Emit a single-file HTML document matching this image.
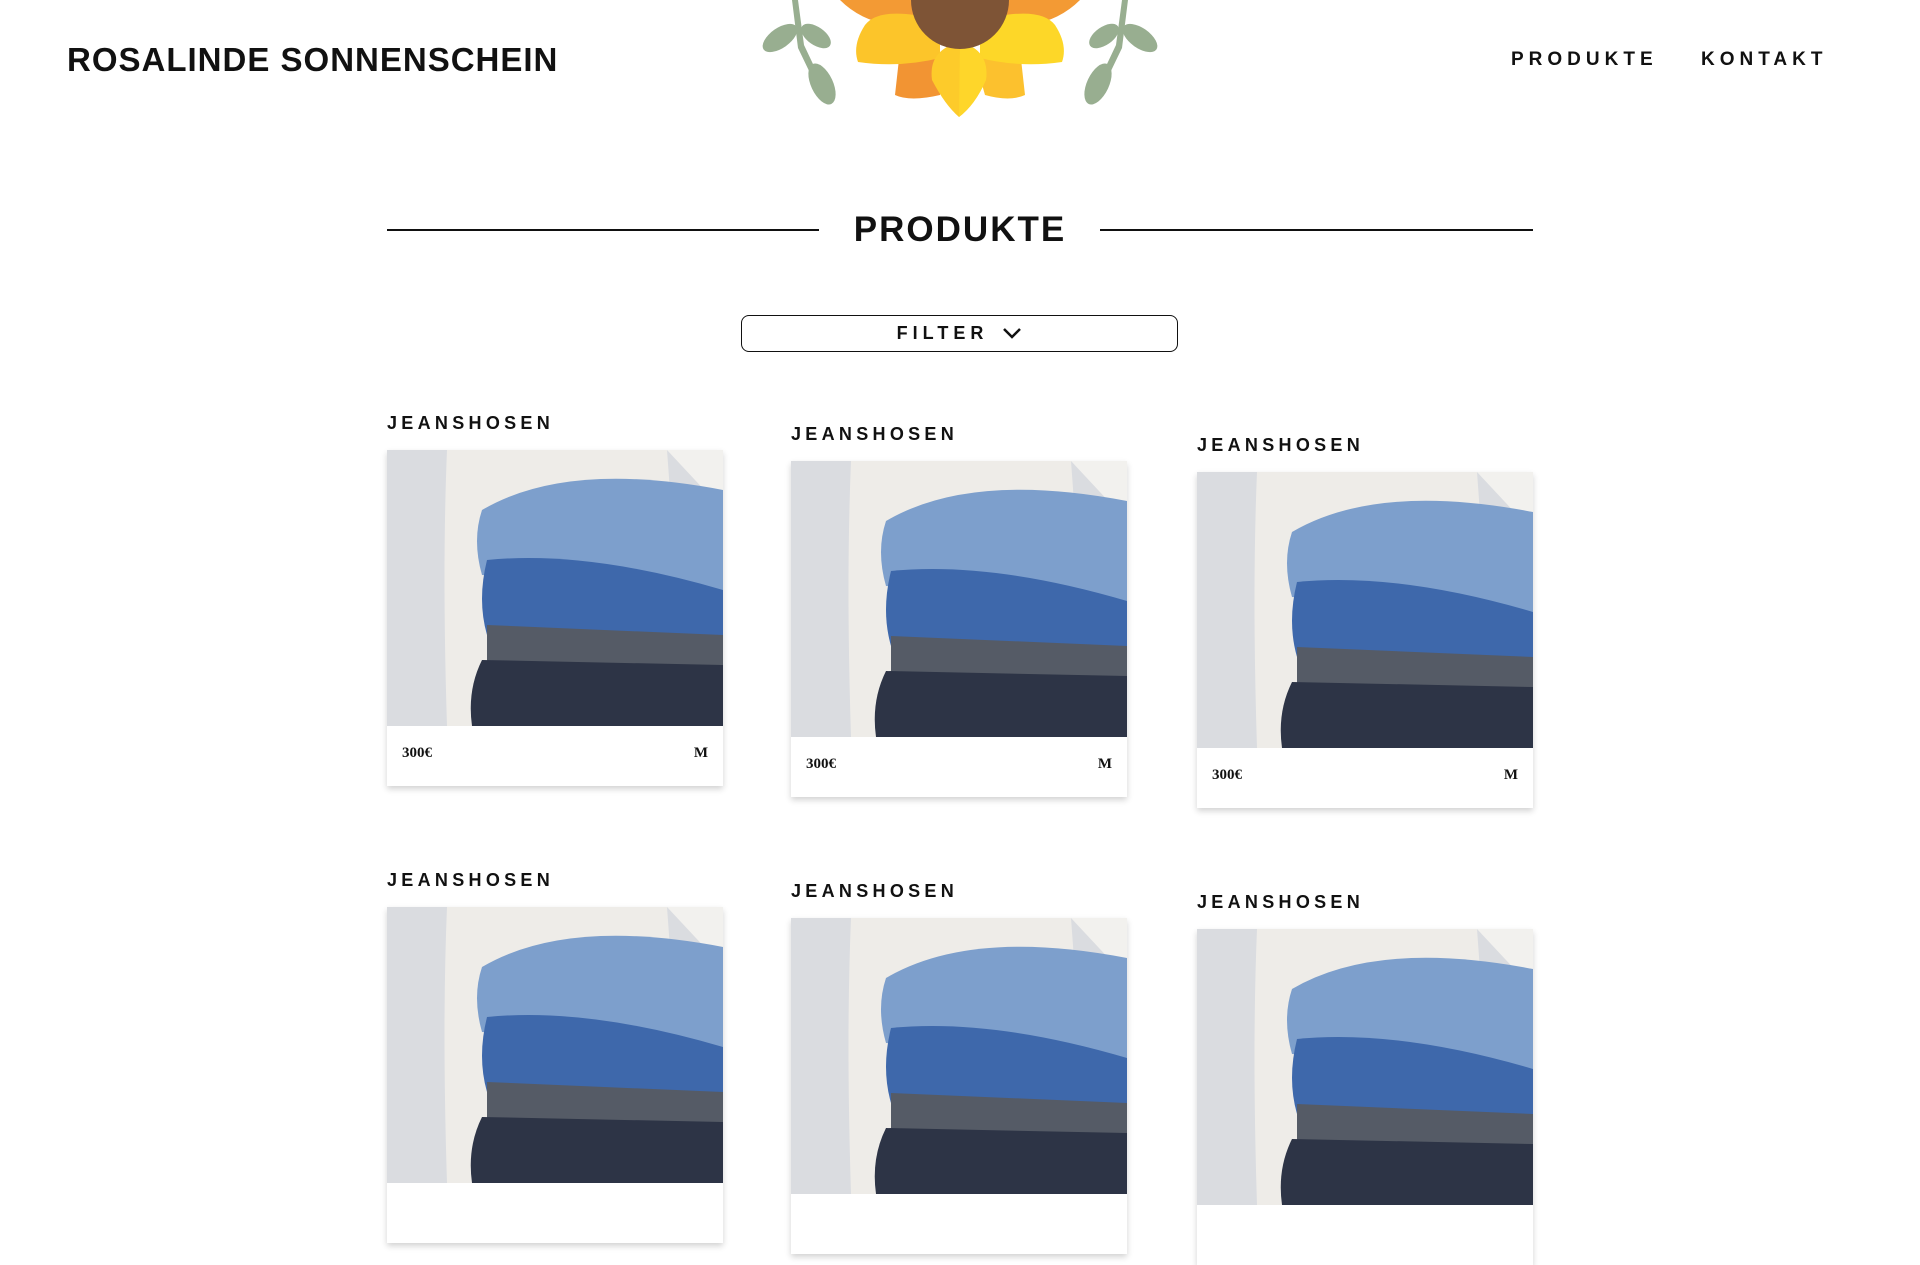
<!DOCTYPE html>
<html><head><meta charset="utf-8"><style>
*{margin:0;padding:0;box-sizing:border-box}
body{width:1920px;height:1080px;overflow:hidden;background:#fff;font-family:"Liberation Sans",sans-serif;position:relative;color:#111}
.logo{position:absolute;left:67px;top:41px;font-size:33px;font-weight:bold;letter-spacing:1px}
.nav{position:absolute;top:49px;font-size:19px;font-weight:bold;letter-spacing:5px}
.title{position:absolute;left:0;width:1920px;text-align:center;top:210px;font-size:35px;font-weight:bold;letter-spacing:2px}
.line{position:absolute;top:229px;height:2px;background:#111}
.filter{position:absolute;left:741px;top:315px;width:437px;height:37px;border:1.5px solid #111;border-radius:8px;text-align:center;font-size:18px;font-weight:bold;letter-spacing:5px;line-height:34px}
.lab{position:absolute;font-size:18px;font-weight:bold;letter-spacing:4.3px}
.card{position:absolute;width:336px;height:336px;box-shadow:0 3px 6px rgba(0,0,0,.18);background:#fff;overflow:hidden}
.card svg{display:block}
.pr{position:absolute;top:295px;font-family:"Liberation Serif",serif;font-weight:bold;font-size:15px}
</style></head><body>
<div class="logo">ROSALINDE SONNENSCHEIN</div>
<div class="nav" style="left:1511px">PRODUKTE</div>
<div class="nav" style="left:1701px">KONTAKT</div>
<svg style="position:absolute;left:740px;top:0" width="440" height="125" viewBox="0 0 440 125">
<g fill="#98ae90"><path d="M52 0 L58 0 L64 45 L90 100 L84 102 L58 48Z"/><ellipse cx="40" cy="38" rx="20" ry="10" transform="rotate(-35 40 38)"/><ellipse cx="76" cy="36" rx="17" ry="9" transform="rotate(35 76 36)"/><ellipse cx="82" cy="84" rx="11" ry="22" transform="rotate(-25 82 84)"/>
<path d="M388 0 L382 0 L376 45 L350 100 L356 102 L382 48Z"/><ellipse cx="400" cy="38" rx="20" ry="10" transform="rotate(35 400 38)"/><ellipse cx="364" cy="36" rx="17" ry="9" transform="rotate(-35 364 36)"/><ellipse cx="358" cy="84" rx="11" ry="22" transform="rotate(25 358 84)"/></g>
<path d="M100 0 L340 0 Q320 20 290 25 L150 25 Q120 20 100 0Z" fill="#f39a34"/>
<path d="M160 50 L155 95 Q170 102 200 95 L205 60Z" fill="#f29433"/>
<path d="M235 60 L245 95 Q270 102 285 95 L280 50Z" fill="#fcc12e"/>
<path d="M200 20 Q140 5 125 25 Q112 45 118 62 Q160 68 200 58Z" fill="#fcc52a"/>
<path d="M240 20 Q300 5 315 25 Q328 45 322 62 Q280 68 240 58Z" fill="#fdd728"/>
<path d="M220 42 Q188 50 192 80 Q205 105 219 117 Q235 105 246 80 Q250 50 220 42Z" fill="#fdcb2a"/>
<path d="M220 42 Q250 50 246 80 Q235 105 219 117Z" fill="#fed62a"/>
<ellipse cx="220" cy="0" rx="49" ry="49" fill="#7e5436"/>
</svg>
<div class="line" style="left:387px;width:432px"></div>
<div class="line" style="left:1100px;width:433px"></div>
<div class="title">PRODUKTE</div>
<div class="filter">FILTER <svg width="20" height="14" viewBox="0 0 20 14" style="vertical-align:-1px;margin-left:4px"><path d="M2 3 L10 11 L18 3" stroke="#111" stroke-width="2.5" fill="none"/></svg></div>

<svg width="0" height="0" style="position:absolute"><defs>
<g id="j">
<rect width="336" height="276" fill="#dadce0"/>
<path d="M60 0 L280 0 L300 276 L60 276 Q55 120 60 0Z" fill="#eeece8"/>
<path d="M280 0 L336 0 L336 60 Z" fill="#f2f1ee"/>
<path d="M95 60 Q180 10 336 40 L336 140 L95 125 Q85 90 95 60Z" fill="#7d9fcc"/>
<path d="M100 110 Q200 100 336 140 L336 195 L100 185 Q90 150 100 110Z" fill="#3e68ab"/>
<path d="M100 175 L336 185 L336 225 L100 220Z" fill="#555b66"/>
<path d="M95 210 L336 215 L336 276 L85 276 Q80 240 95 210Z" fill="#2d3446"/>
</g></defs></svg>

<div class="lab" style="left:387px;top:413px">JEANSHOSEN</div>
<div class="card" style="left:387px;top:450px"><svg width="336" height="276"><use href="#j"/></svg><span class="pr" style="left:15px">300€</span><span class="pr" style="right:15px">M</span></div>
<div class="lab" style="left:791px;top:424px">JEANSHOSEN</div>
<div class="card" style="left:791px;top:461px"><svg width="336" height="276"><use href="#j"/></svg><span class="pr" style="left:15px">300€</span><span class="pr" style="right:15px">M</span></div>
<div class="lab" style="left:1197px;top:435px">JEANSHOSEN</div>
<div class="card" style="left:1197px;top:472px"><svg width="336" height="276"><use href="#j"/></svg><span class="pr" style="left:15px">300€</span><span class="pr" style="right:15px">M</span></div>

<div class="lab" style="left:387px;top:870px">JEANSHOSEN</div>
<div class="card" style="left:387px;top:907px"><svg width="336" height="276"><use href="#j"/></svg></div>
<div class="lab" style="left:791px;top:881px">JEANSHOSEN</div>
<div class="card" style="left:791px;top:918px"><svg width="336" height="276"><use href="#j"/></svg></div>
<div class="lab" style="left:1197px;top:892px">JEANSHOSEN</div>
<div class="card" style="left:1197px;top:929px"><svg width="336" height="276"><use href="#j"/></svg></div>
</body></html>
